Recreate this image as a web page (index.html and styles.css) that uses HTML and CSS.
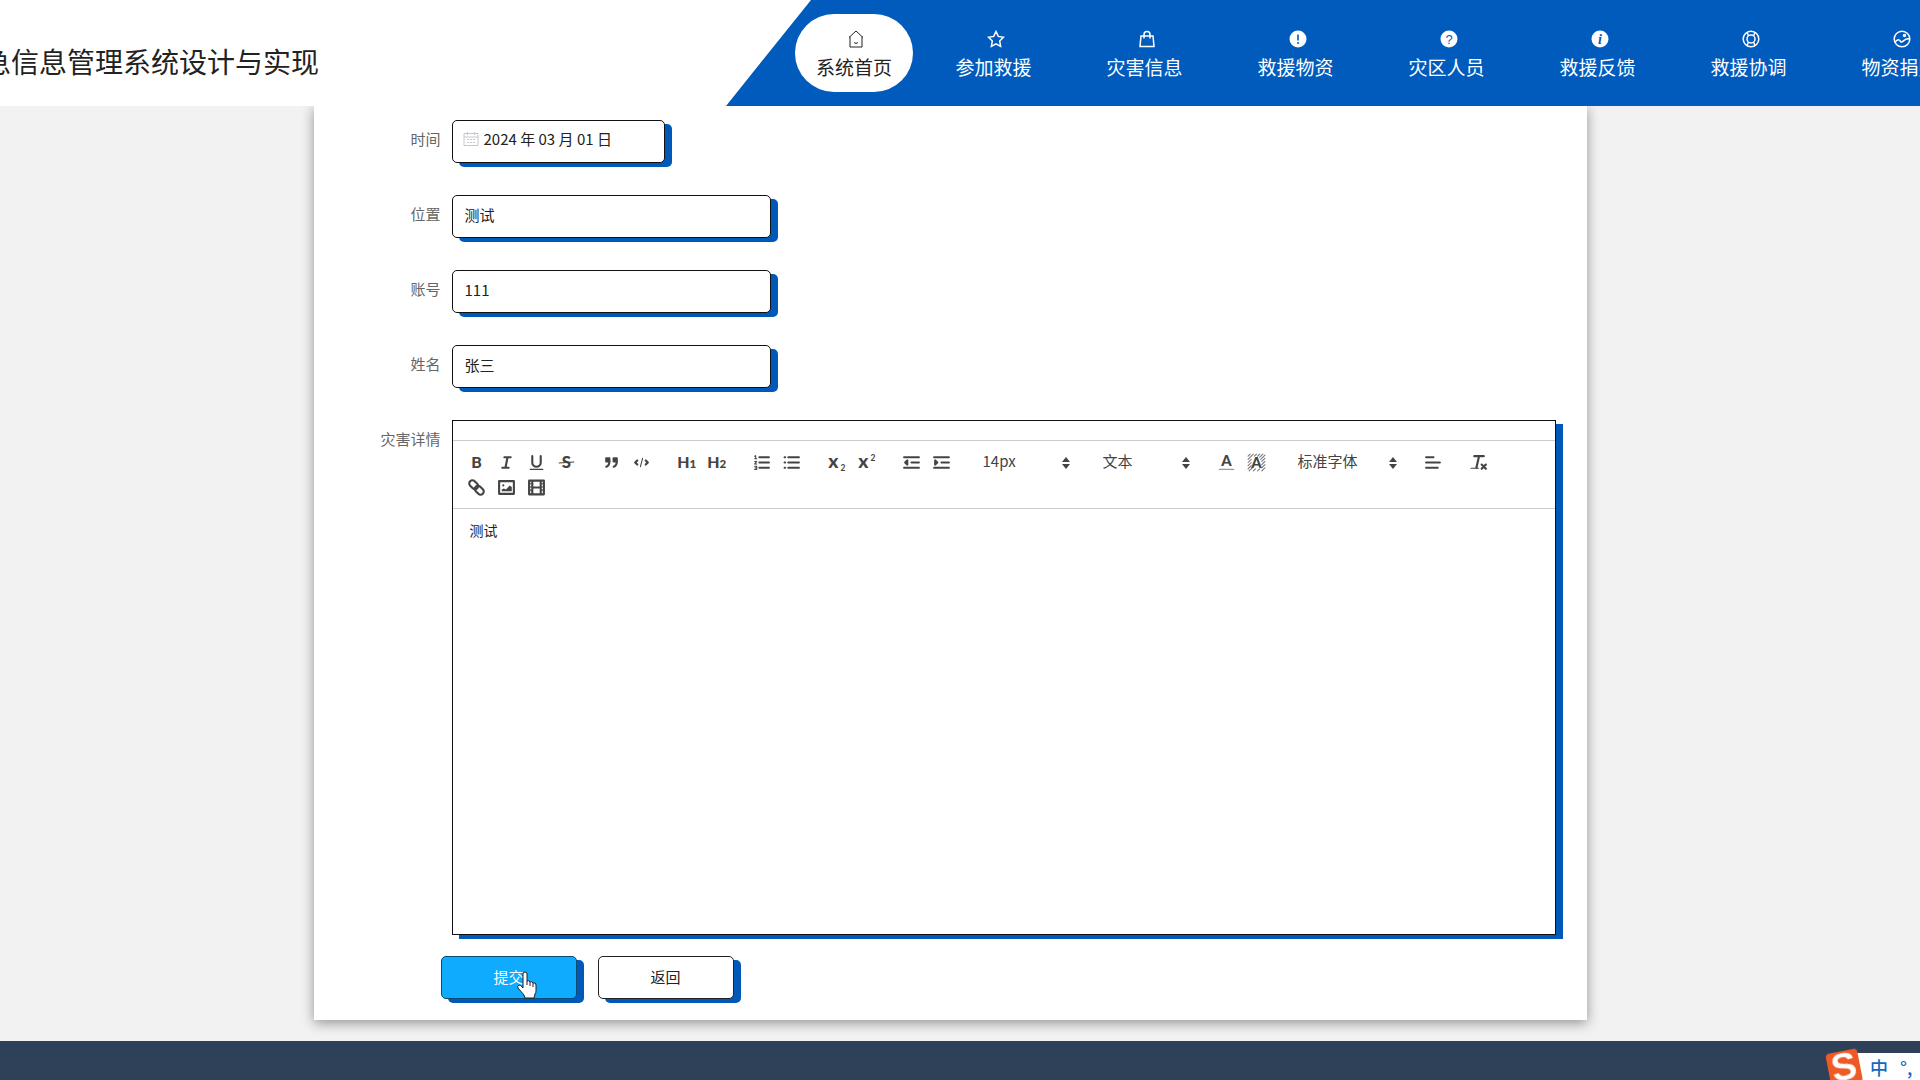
FILE: index.html
```html
<!DOCTYPE html>
<html lang="zh-CN">
<head>
<meta charset="utf-8">
<title>应急信息管理系统设计与实现</title>
<link rel="stylesheet" href="styles.css">
</head>
<body>
<header class="header">
  <div class="brand"><h1 class="title">急信息管理系统设计与实现</h1></div>
  <nav class="nav">
    <a class="nav-item active" href="#">
      <svg class="nav-icon line thin" viewBox="0 0 18 18"><path d="M2 7.500 9 1l7 6.500M3 6.500V17h12V6.500M7 12.500q2 2 4 0"/></svg>
      <span>系统首页</span></a>
    <a class="nav-item" href="#">
      <svg class="nav-icon line" viewBox="0 0 18 18"><path d="m9 1.500 2.300 4.900 5.200.8-3.800 3.800.9 5.400L9 13.800l-4.600 2.600.9-5.400L1.500 7.200l5.200-.8z"/></svg>
      <span>参加救援</span></a>
    <a class="nav-item" href="#">
      <svg class="nav-icon line" viewBox="0 0 18 18"><path d="M3 6h12l1 10.500H2zM6 8.500V4.500a3 3 0 0 1 6 0v4"/></svg>
      <span>灾害信息</span></a>
    <a class="nav-item" href="#">
      <svg class="nav-icon" viewBox="0 0 18 18"><circle cx="9" cy="9" r="8.500" fill="#fff"/><path d="M9 4.500v6" stroke="#005bbd" stroke-width="1.600"/><circle cx="9" cy="13" r="1" fill="#005bbd"/></svg>
      <span>救援物资</span></a>
    <a class="nav-item" href="#">
      <svg class="nav-icon" viewBox="0 0 18 18"><circle cx="9" cy="9" r="8.500" fill="#fff"/><text class="badge-text" x="9" y="13.500">?</text></svg>
      <span>灾区人员</span></a>
    <a class="nav-item" href="#">
      <svg class="nav-icon" viewBox="0 0 18 18"><circle cx="9" cy="9" r="8.500" fill="#fff"/><text class="badge-text slanted" x="9" y="13.500">i</text></svg>
      <span>救援反馈</span></a>
    <a class="nav-item" href="#">
      <svg class="nav-icon line" viewBox="0 0 18 18"><circle cx="9" cy="9" r="7.800"/><circle cx="9" cy="9" r="4"/><path d="M5 2.500 6.500 6M13 2.500 11.500 6M5 15.500 6.500 12M13 15.500 11.500 12"/></svg>
      <span>救援协调</span></a>
    <a class="nav-item" href="#">
      <svg class="nav-icon line" viewBox="0 0 18 18"><circle cx="9" cy="9" r="7.800"/><path d="M2 12.500c3-4.500 4.500-2.500 6-.5 2 1 3.500-4.500 8.500-3"/><circle cx="11.500" cy="5.500" r="1"/></svg>
      <span>物资捐赠</span></a>
  </nav>
</header>

<main class="main">
  <form class="card">
    <div class="row">
      <label class="label" for="date">时间</label>
      <div class="date-box field">
        <svg class="calendar" viewBox="0 0 16 16"><path d="M1 2.500h14v12H1zM1 6h14M4.500 1v3M11.500 1v3M4 8.500h2M7 8.500h2M10 8.500h2M4 11.500h2M7 11.500h2M10 11.500h2"/></svg>
        <input class="date-input" id="date" type="text" value="2024 年 03 月 01 日">
      </div>
    </div>
    <div class="row">
      <label class="label" for="place">位置</label>
      <input class="field text-input" id="place" type="text" value="测试">
    </div>
    <div class="row">
      <label class="label" for="account">账号</label>
      <input class="field text-input" id="account" type="text" value="111">
    </div>
    <div class="row">
      <label class="label" for="name">姓名</label>
      <input class="field text-input" id="name" type="text" value="张三">
    </div>
    <div class="row">
      <label class="label" for="detail">灾害详情</label>
      <div class="editor">
        <div class="toolbar">
          <div class="group">
            <button class="tool" type="button" aria-label="加粗"><svg viewBox="0 0 18 18"><text class="glyph" x="9" y="14" font-size="15">B</text></svg></button>
            <button class="tool" type="button" aria-label="斜体"><svg viewBox="0 0 18 18"><path d="M7 4h6M5 14h6M8 14l2-10"/></svg></button>
            <button class="tool" type="button" aria-label="下划线"><svg viewBox="0 0 18 18"><path d="M5 3v6a4 4 0 0 0 8 0V3"/><path class="fine" d="M3 15.500h12"/></svg></button>
            <button class="tool" type="button" aria-label="删除线"><svg viewBox="0 0 18 18"><text class="glyph" x="9" y="14.500" font-size="16">S</text><path class="fine" d="m16 8.500-14 1"/></svg></button>
          </div>
          <div class="group">
            <button class="tool" type="button" aria-label="引用"><svg viewBox="0 0 18 18"><path class="solid" d="M4 5h3v3H4zM11 5h3v3h-3z"/><path d="M7 8c0 4-3 5-3 5M14 8c0 4-3 5-3 5"/></svg></button>
            <button class="tool" type="button" aria-label="代码"><svg viewBox="0 0 18 18"><path d="M5 7 3 9l2 2M13 7l2 2-2 2"/><path class="fine" d="m10 5-2 8"/></svg></button>
          </div>
          <div class="group">
            <button class="tool" type="button" aria-label="标题 1"><svg viewBox="0 0 18 18"><text class="glyph" x="6" y="14" font-size="15">H</text><text class="glyph" x="15" y="14" font-size="11">1</text></svg></button>
            <button class="tool" type="button" aria-label="标题 2"><svg viewBox="0 0 18 18"><text class="glyph" x="6" y="14" font-size="15">H</text><text class="glyph" x="15" y="14" font-size="11">2</text></svg></button>
          </div>
          <div class="group">
            <button class="tool" type="button" aria-label="有序列表"><svg viewBox="0 0 18 18"><path d="M7 4h9M7 9h9M7 14h9"/><path class="fine" d="M2.500 5.500h2M3.500 5.500v-3l-1 .5M2.500 8h2L2.500 10.500h2M2.500 12.500h2v3h-2M3 14h1.500"/></svg></button>
            <button class="tool" type="button" aria-label="无序列表"><svg viewBox="0 0 18 18"><path d="M6 4h10M6 9h10M6 14h10M2.500 4h.5M2.500 9h.5M2.500 14h.5"/></svg></button>
          </div>
          <div class="group">
            <button class="tool" type="button" aria-label="下标"><svg viewBox="0 0 18 18"><text class="glyph" x="6" y="14" font-size="18">x</text><text class="glyph medium" x="15" y="17" font-size="8">2</text></svg></button>
            <button class="tool" type="button" aria-label="上标"><svg viewBox="0 0 18 18"><text class="glyph" x="6" y="14" font-size="18">x</text><text class="glyph medium" x="15" y="8" font-size="8">2</text></svg></button>
          </div>
          <div class="group">
            <button class="tool" type="button" aria-label="减少缩进"><svg viewBox="0 0 18 18"><path d="M2 4h14M2 14h14M9 9h7"/><path class="solid" d="M5 7v4L3 9z"/></svg></button>
            <button class="tool" type="button" aria-label="增加缩进"><svg viewBox="0 0 18 18"><path d="M2 4h14M2 14h14M9 9h7"/><path class="solid" d="M3 7v4l2-2z"/></svg></button>
          </div>
          <div class="picker">
            <select class="picker-select" aria-label="字号"><option>14px</option></select>
            <svg class="arrows" viewBox="0 0 8 12"><path d="M0 5 4 0l4 5zM0 7l4 5 4-5z"/></svg>
          </div>
          <div class="picker">
            <select class="picker-select" aria-label="段落"><option>文本</option></select>
            <svg class="arrows" viewBox="0 0 8 12"><path d="M0 5 4 0l4 5zM0 7l4 5 4-5z"/></svg>
          </div>
          <div class="group">
            <button class="tool" type="button" aria-label="文字颜色"><svg viewBox="0 0 18 18"><text class="glyph" x="9" y="12" font-size="14">A</text><path class="fine pale" d="M2 15.500h14"/></svg></button>
            <button class="tool" type="button" aria-label="背景颜色"><svg viewBox="0 0 18 18"><path class="hatch" d="M1 3l2-2M1 6l5-5M1 9l3-3M1 12l3-3M1 15l3-3M2 17l3-3M7 3l2-2M10 3l2-2M12 4l3-3M13 6l4-4M14 8l3-3M14 11l3-3M14 14l3-3M14 17l3-3M6 17l2-2M10 17l2-2"/><text class="glyph" x="9" y="14" font-size="14">A</text></svg></button>
          </div>
          <div class="picker wide">
            <select class="picker-select" aria-label="字体"><option>标准字体</option></select>
            <svg class="arrows" viewBox="0 0 8 12"><path d="M0 5 4 0l4 5zM0 7l4 5 4-5z"/></svg>
          </div>
          <div class="group">
            <button class="tool" type="button" aria-label="对齐"><svg viewBox="0 0 18 18"><path d="M2 4h7M2 9h13M2 14h11"/></svg></button>
          </div>
          <div class="group">
            <button class="tool" type="button" aria-label="清除格式"><svg viewBox="0 0 18 18"><path d="M5 3h9M9.500 3l-2.500 11M12 11l4 4M16 11l-4 4"/><path class="fine" d="M2 14.500h7"/></svg></button>
          </div>
          <div class="group">
            <button class="tool" type="button" aria-label="链接"><svg viewBox="0 0 18 18"><g transform="rotate(45 9 9)"><rect x="0.500" y="6" width="9.500" height="6" rx="3"/><rect x="8" y="6" width="9.500" height="6" rx="3"/></g></svg></button>
            <button class="tool" type="button" aria-label="图片"><svg viewBox="0 0 18 18"><path d="M2 3h14v12H2z"/><circle class="dot" cx="6" cy="7" r="1"/><path class="dot" d="M4.500 12.500v-1.500l2-1 2 1L12 7l2 1.500v4z"/></svg></button>
            <button class="tool" type="button" aria-label="视频"><svg viewBox="0 0 18 18"><path d="M2 2.500h14v13H2zM5 2.500v13M13 2.500v13M5 9h8"/><path class="fine" d="M2 5.500h3M2 8.500h3M2 11.500h3M13 5.500h3M13 8.500h3M13 11.500h3"/></svg></button>
          </div>
        </div>
        <textarea class="content" id="detail">测试</textarea>
      </div>
    </div>
    <div class="actions">
      <button class="btn primary" type="submit">提交
        <svg class="cursor" viewBox="0 0 22 28"><path d="M7 3a2 2 0 0 1 4 0v7q2-1 3 1 2-1 3 1 3-1 3 2v6q0 2-1 3l-1 4H9l-1-3-6-7q-1-2 1-3 2 0 3 2l1 1z"/><path d="M11 10v4M14 11v4M17 12v4"/></svg>
      </button>
      <button class="btn" type="button">返回</button>
    </div>
  </form>
</main>

<footer class="footer"></footer>

<aside class="ime">
  <svg class="ime-logo" viewBox="0 0 38 38"><g transform="rotate(-11 19 19)"><rect x="3" y="3" width="32" height="34" rx="4" fill="#ee5a24"/><text x="19" y="32" font-size="38">S</text></g></svg>
  <span>中</span><span>°,</span>
</aside>
</body>
</html>
```
FILE: styles.css
```css
* {
  box-sizing: border-box;
}

body {
  display: flex;
  flex-direction: column;
  min-height: 100vh;
  margin: 0;
  overflow-x: hidden;
  background: #f2f2f2;
  color: #222;
  font: 15px/24px "Noto Sans CJK SC", "Liberation Sans", sans-serif;
}

input,
select,
textarea,
button {
  margin: 0;
  padding: 0;
  border: 0;
  outline: 0;
  background: none;
  color: inherit;
  font: inherit;
}

/* Header */

.header {
  position: relative;
  z-index: 1;
  display: flex;
  height: 106px;
  background: #fff;
}

.brand {
  flex: 0 0 726px;
  padding-top: 39px;
}

.title {
  display: flex;
  justify-content: flex-end;
  width: 319px;
  margin: 0;
  overflow: hidden;
  font-size: 28px;
  font-weight: 400;
  line-height: 44px;
  white-space: nowrap;
}

.nav {
  display: flex;
  flex: 1;
  align-items: center;
  min-width: 0;
  padding-left: 69px;
  overflow: hidden;
  background: #005bbd;
  clip-path: polygon(85px 0, 100% 0, 100% 100%, 0 100%);
}

.nav-item {
  display: flex;
  flex: 0 0 151px;
  flex-direction: column;
  align-items: center;
  gap: 5px;
  height: 78px;
  padding-top: 16px;
  color: #fff;
  font-size: 19px;
  line-height: 28px;
  text-decoration: none;
}

.nav-item.active {
  flex-basis: 118px;
  margin-right: 5px;
  border-radius: 39px;
  background: #fff;
  color: #222;
}

.nav-icon {
  width: 18px;
  height: 18px;
  margin-left: 4px;
}

.line {
  fill: none;
  stroke: currentColor;
  stroke-width: 1.5;
}

.thin {
  stroke-width: 1;
}

.badge-text {
  fill: #005bbd;
  font: 13px "Liberation Sans", sans-serif;
  text-anchor: middle;
}

.slanted {
  font: italic bold 14px "Liberation Serif", serif;
}

/* Form */

.main {
  padding: 0 20px 21px 0;
}

.card {
  display: flex;
  flex-direction: column;
  gap: 32px;
  width: 67%;
  margin: 0 auto;
  padding: 14px 31px 21px 0;
  background: #fff;
  box-shadow: 0 3px 12px rgba(0, 0, 0, 0.4);
}

.row {
  display: flex;
  gap: 11px;
}

.label {
  flex: 0 0 127px;
  color: #666;
  line-height: 38px;
  text-align: right;
}

.field {
  height: 43px;
  border: 1px solid #111;
  border-radius: 5px;
  background: #fff;
  box-shadow: 7px 4px 0 #0058b8;
}

.text-input {
  width: 319px;
  padding: 0 12px 5px;
}

.date-box {
  display: flex;
  align-items: center;
  gap: 5px;
  width: 213px;
  padding: 0 10px 5px;
}

.calendar {
  flex: none;
  width: 16px;
  height: 16px;
  fill: none;
  stroke: #c4c7cc;
}

.date-input {
  flex: 1;
  min-width: 0;
}

.editor {
  display: flex;
  flex: 1;
  flex-direction: column;
  min-width: 0;
  height: 515px;
  padding-top: 19px;
  border: 1px solid #111;
  background: #fff;
  box-shadow: 7px 4px 0 #0058b8;
}

.toolbar {
  display: flex;
  flex-wrap: wrap;
  column-gap: 15px;
  padding: 9px;
  padding-bottom: 8px;
  border: solid #ccc;
  border-width: 1px 0;
}

.group {
  display: flex;
}

.tool {
  display: flex;
  align-items: center;
  justify-content: center;
  width: 30px;
  height: 25px;
}

.tool svg {
  width: 19px;
  height: 19px;
  overflow: visible;
  fill: none;
  stroke: #444;
  stroke-linecap: round;
  stroke-linejoin: round;
  stroke-width: 2;
}

.tool .fine {
  stroke-width: 1;
}

.tool .pale {
  stroke: #999;
}

.tool .hatch {
  stroke: #777;
  stroke-width: 1;
}

.tool .solid {
  fill: #444;
}

.tool .dot {
  fill: #444;
  stroke: none;
}

.glyph {
  fill: #444;
  stroke: none;
  font-family: Lato, sans-serif;
  font-weight: 900;
  text-anchor: middle;
}

.medium {
  font-weight: 700;
}

.picker {
  position: relative;
  width: 105px;
  height: 25px;
}

.picker.wide {
  width: 117px;
}

.picker-select {
  display: block;
  width: 100%;
  height: 22px;
  padding-left: 11px;
  appearance: none;
  color: #444;
  line-height: 22px;
}

.arrows {
  position: absolute;
  top: 7px;
  right: 7px;
  width: 8px;
  height: 12px;
  fill: #444;
  pointer-events: none;
}

.content {
  flex: 1;
  padding: 10px 17px;
  resize: none;
  font-size: 14px;
  line-height: 22px;
}

.actions {
  display: flex;
  gap: 21px;
  margin-top: -11px;
  padding-left: 127px;
}

.btn {
  position: relative;
  width: 136px;
  height: 43px;
  padding-bottom: 2px;
  border: 1px solid #222;
  border-radius: 5px;
  background: #fff;
  box-shadow: 7px 4px 0 #0058b8;
}

.btn.primary {
  border-color: #0b4a70;
  background: #0eabff;
  color: #fff;
}

.cursor {
  position: absolute;
  top: 14px;
  left: 74px;
  width: 22px;
  height: 28px;
  fill: #fff;
  stroke: #222;
}

/* Footer and input method bar */

.footer {
  flex: 1;
  min-height: 39px;
  background: #2f4059;
}

.ime {
  position: fixed;
  right: 0;
  bottom: 0;
  z-index: 2;
  display: flex;
  align-items: center;
  gap: 12px;
  width: 76px;
  height: 27px;
  padding-left: 26px;
  background: #fff;
  color: #1268c3;
  font-size: 18px;
  font-weight: 500;
  white-space: nowrap;
}

.ime-logo {
  position: absolute;
  bottom: -6px;
  left: -19px;
  width: 38px;
  height: 38px;
  overflow: visible;
  fill: #fff;
  font: bold 38px "Liberation Sans", sans-serif;
  text-anchor: middle;
}
```
